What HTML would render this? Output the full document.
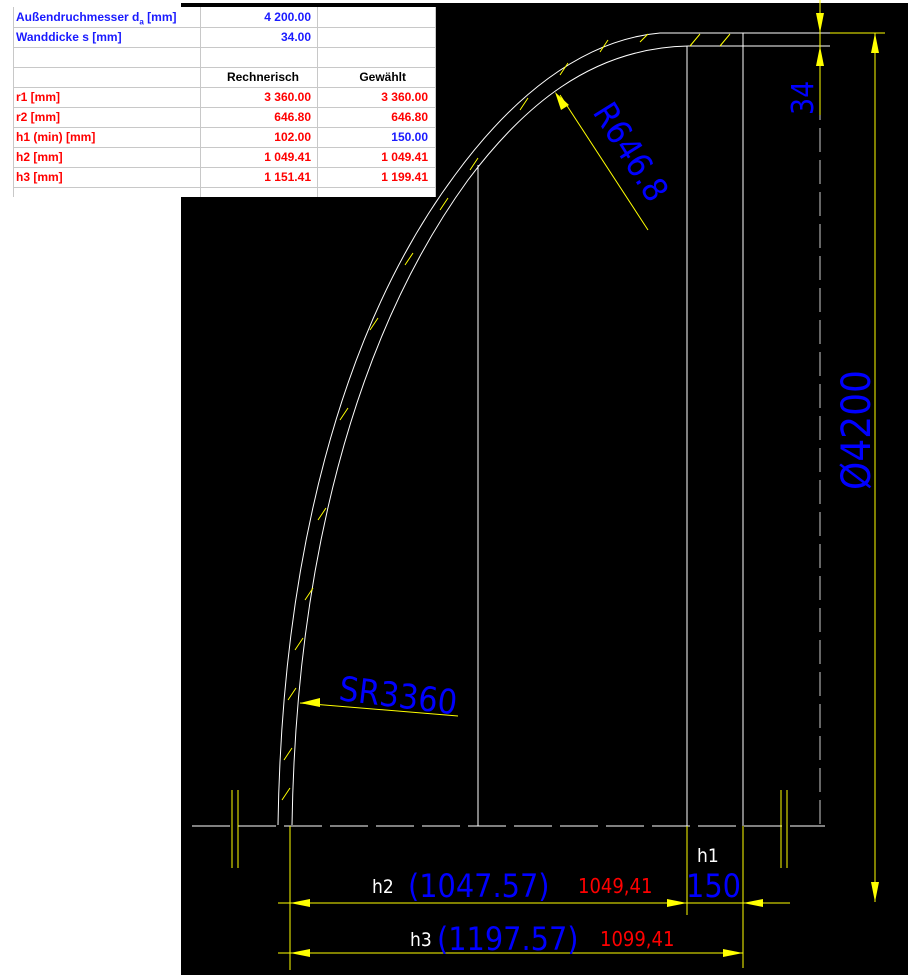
<!DOCTYPE html>
<html><head><meta charset="utf-8"><style>
body{margin:0;width:908px;height:975px;overflow:hidden;background:#fff;position:relative;font-family:"Liberation Sans",sans-serif}
#blk{position:absolute;left:181px;top:3px;width:727px;height:972px;background:#000}
#tbl{position:absolute;left:0;top:7px;width:436px;height:190px;background:#fff;font-size:12px;font-weight:bold}
.r{position:absolute;left:13px;width:423px;height:20px;border-bottom:1px solid #c8c8c8;line-height:20px}
.c1{position:absolute;left:3px}.c2{position:absolute;right:125px}.c3{position:absolute;right:8px}
.vl{position:absolute;top:0;height:190px;border-left:1px solid #c8c8c8}
.b{color:#1a1aff}.rd{color:#f00}
svg{position:absolute;left:0;top:0}
</style></head><body>
<div id="blk"></div>
<div id="tbl">
<div class="vl" style="left:13px"></div><div class="vl" style="left:200px"></div><div class="vl" style="left:317px"></div><div class="vl" style="left:435px"></div>
<div class="r b" style="top:0"><span class="c1">Außendruchmesser d<sub style="font-size:8px">a</sub> [mm]</span><span class="c2">4 200.00</span></div>
<div class="r b" style="top:20px"><span class="c1">Wanddicke s [mm]</span><span class="c2">34.00</span></div>
<div class="r" style="top:40px"></div>
<div class="r" style="top:60px"><span class="c2" style="right:137px;color:#000">Rechnerisch</span><span class="c3" style="right:30px;color:#000">Gewählt</span></div>
<div class="r rd" style="top:80px"><span class="c1">r1 [mm]</span><span class="c2">3 360.00</span><span class="c3">3 360.00</span></div>
<div class="r rd" style="top:100px"><span class="c1">r2 [mm]</span><span class="c2">646.80</span><span class="c3">646.80</span></div>
<div class="r rd" style="top:120px"><span class="c1">h1 (min) [mm]</span><span class="c2">102.00</span><span class="c3 b">150.00</span></div>
<div class="r rd" style="top:140px"><span class="c1">h2 [mm]</span><span class="c2">1 049.41</span><span class="c3">1 049.41</span></div>
<div class="r rd" style="top:160px"><span class="c1">h3 [mm]</span><span class="c2">1 151.41</span><span class="c3">1 199.41</span></div>
</div>
<svg width="908" height="975" viewBox="0 0 908 975">
<g fill="none" stroke="#fff" stroke-width="1">
<path d="M278,825 C282,560 340,330 455,175 C510,100 580,40 660,33 L830,33"/>
<path d="M292,825 C296,570 352,340 468,180 C522,108 590,48 688,46 L830,46"/>
<line x1="478" y1="165" x2="478" y2="826"/>
<line x1="687" y1="46" x2="687" y2="826"/>
<line x1="743" y1="33" x2="743" y2="826"/>
<line x1="192" y1="826" x2="825" y2="826" stroke-dasharray="38,8"/>
<line x1="820" y1="0" x2="820" y2="825" stroke-dasharray="24,8" stroke="#ccc"/>
</g>
<g stroke="#ff0" stroke-width="1" fill="none">
<path d="M282,800l8,-12M284,760l8,-12M288,700l8,-12M295,650l8,-12M305,600l8,-12M318,520l8,-12M340,420l8,-12M370,330l8,-12M405,265l8,-12M440,210l8,-12M470,170l8,-12M520,110l8,-12M560,75l8,-12M600,52l8,-12M640,42l8,-8M690,46l10,-12M720,46l10,-12"/>
<line x1="290" y1="826" x2="290" y2="970"/>
<line x1="687" y1="826" x2="687" y2="915"/>
<line x1="743" y1="826" x2="743" y2="968"/>
<line x1="232" y1="790" x2="232" y2="868"/><line x1="238" y1="790" x2="238" y2="868"/>
<line x1="781" y1="790" x2="781" y2="868"/><line x1="787" y1="790" x2="787" y2="868"/>
<line x1="278" y1="903" x2="790" y2="903"/>
<line x1="278" y1="953" x2="743" y2="953"/>
<line x1="875" y1="33" x2="875" y2="902"/>
<line x1="830" y1="33" x2="885" y2="33"/>
<line x1="820" y1="0" x2="820" y2="115"/>
<line x1="560" y1="95" x2="648" y2="230"/>
<line x1="300" y1="703" x2="458" y2="716"/>
</g>
<g fill="#ff0">
<path d="M290,903l20,-4v8z M687,903l-20,-4v8z M743,903l20,-4v8z M290,953l20,-4v8z M743,953l-20,-4v8z"/>
<path d="M875,33l-4,20h8z M875,902l-4,-20h8z M820,33l-4,-20h8z M820,46l-4,20h8z M555,92l6,18l8,-5z M300,703l20,-5v9z"/>
</g>
<g font-family="'DejaVu Sans Condensed','Liberation Sans Narrow',sans-serif">
<text x="372" y="893" font-size="19" fill="#fff">h2</text>
<text x="408" y="897" font-size="32" fill="#00f">(1047.57)</text>
<text x="578" y="893" font-size="20" fill="#f00">1049,41</text>
<text x="697" y="862" font-size="19" fill="#fff">h1</text>
<text x="686" y="897" font-size="32" fill="#00f">150</text>
<text x="410" y="946" font-size="19" fill="#fff">h3</text>
<text x="437" y="950" font-size="32" fill="#00f">(1197.57)</text>
<text x="600" y="946" font-size="20" fill="#f00">1099,41</text>
<text x="338" y="700" font-size="34" fill="#00f" transform="rotate(7 338 700)">SR3360</text>
<text x="592" y="112" font-size="34" fill="#00f" transform="rotate(58 592 112)">R646.8</text>
<text x="813" y="115" font-size="30" fill="#00f" transform="rotate(-90 813 115)">34</text>
<text x="870" y="490" font-size="40" fill="#00f" transform="rotate(-90 870 490)">Ø4200</text>
</g>
</svg>
</body></html>
